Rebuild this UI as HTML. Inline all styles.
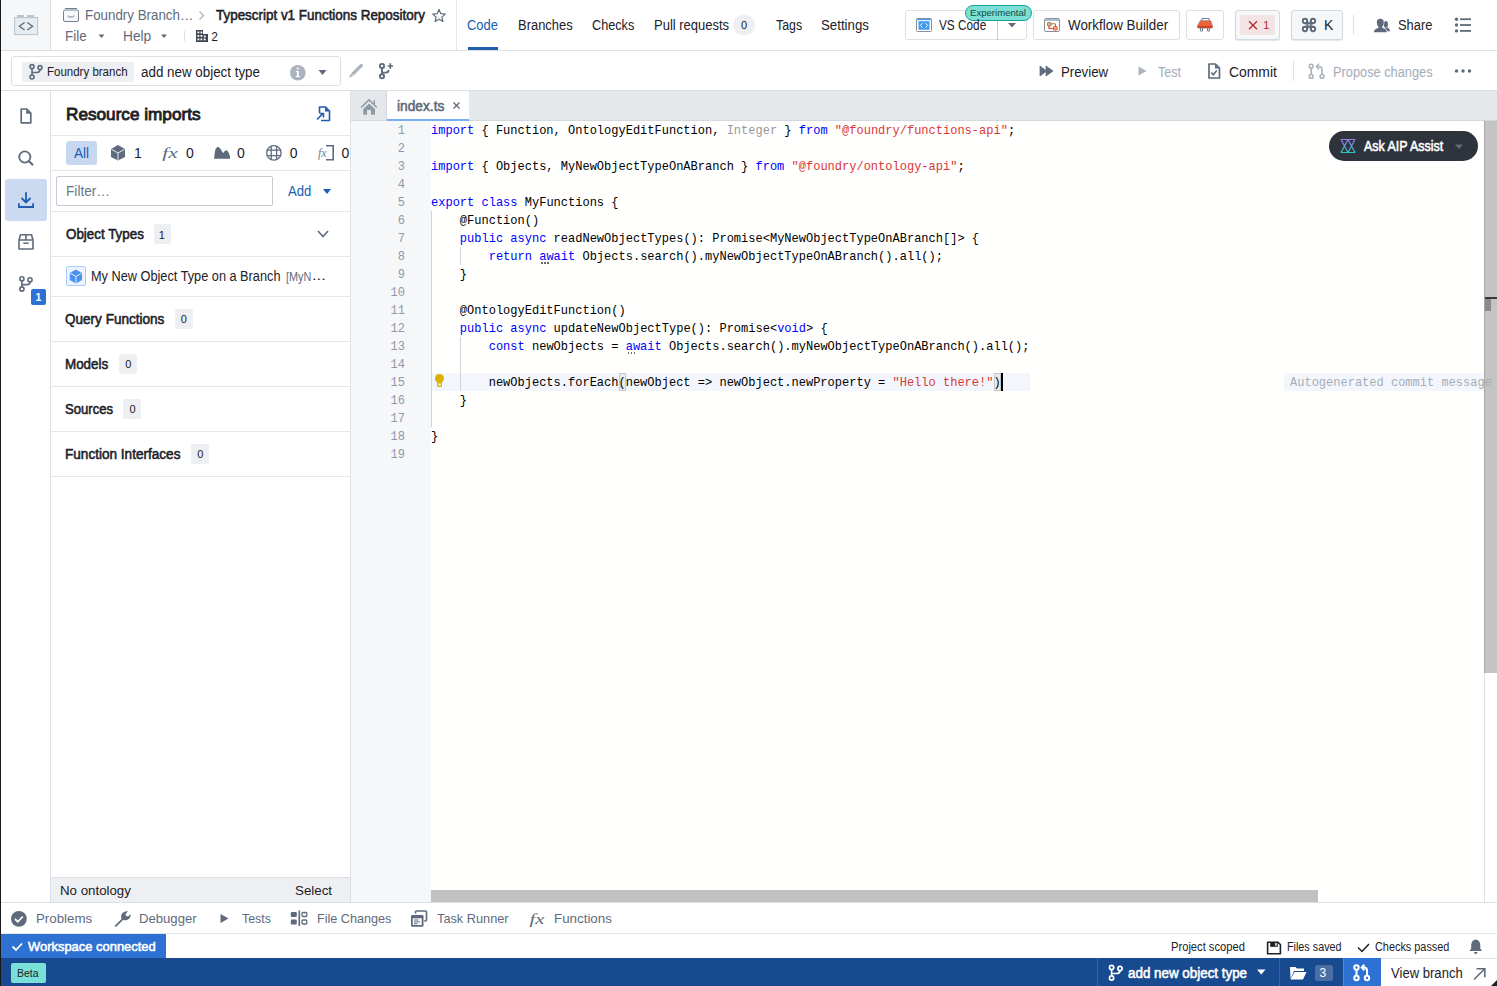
<!DOCTYPE html>
<html><head><meta charset="utf-8">
<style>
*{box-sizing:border-box;margin:0;padding:0}
html,body{width:1497px;height:986px;overflow:hidden;background:#fff}
body{position:relative;font-family:"Liberation Sans",sans-serif;color:#1c2127}
.a{position:absolute}
.t{position:absolute;white-space:pre;line-height:1}
svg{position:absolute;overflow:visible}
</style></head><body>
<!-- left black edge -->
<div class="a" style="left:0;top:0;width:1px;height:934px;background:#111418"></div>
<!-- app icon box -->
<div class="a" style="left:1px;top:0;width:49px;height:50px;background:#f6f7f9"></div>
<div class="a" style="left:50px;top:0;width:1px;height:50px;background:#dce0e5"></div>
<!-- header bottom border -->
<div class="a" style="left:1px;top:50px;width:1496px;height:1px;background:#dce0e5"></div>
<!-- tabs separator -->
<div class="a" style="left:456px;top:0;width:1px;height:50px;background:#e5e8eb"></div>
<!-- row2 bottom border -->
<div class="a" style="left:1px;top:90px;width:1496px;height:1px;background:#dce0e5"></div>

<!-- Code tab underline -->
<div class="a" style="left:468px;top:47px;width:30px;height:3px;background:#215db0"></div>
<!-- pull requests badge -->
<div class="a" style="left:733px;top:15px;width:22px;height:20px;border-radius:10px;background:#edeff2"></div>

<!-- VS Code button -->
<div class="a" style="left:905px;top:10px;width:122px;height:30px;border:1px solid #dce0e5;border-radius:3px;background:#fff"></div>
<div class="a" style="left:997px;top:10px;width:1px;height:30px;background:#c5cbd3"></div>
<div class="a" style="left:965px;top:5px;width:67px;height:16px;border-radius:8px;background:#7cdfd5;border:1px solid #17a395"></div>
<!-- Workflow builder button -->
<div class="a" style="left:1033px;top:10px;width:147px;height:30px;border:1px solid #dce0e5;border-radius:3px;background:#fff"></div>
<!-- plug button -->
<div class="a" style="left:1186px;top:10px;width:38px;height:30px;border:1px solid #dce0e5;border-radius:3px;background:#fff"></div>
<!-- error button -->
<div class="a" style="left:1235px;top:10px;width:45px;height:30px;border:1px solid #d3d8de;border-radius:3px;background:#f6f7f9;box-shadow:0 1px 1px rgba(17,20,24,.1)"></div>
<div class="a" style="left:1240px;top:15px;width:35px;height:20px;border-radius:2px;background:#f2e4e5"></div>
<!-- cmd K button -->
<div class="a" style="left:1291px;top:10px;width:52px;height:30px;border:1px solid #d3d8de;border-radius:3px;background:#f6f7f9;box-shadow:0 1px 1px rgba(17,20,24,.1)"></div>
<div class="a" style="left:1353px;top:15px;width:1px;height:20px;background:#dce0e5"></div>

<!-- branch selector box -->
<div class="a" style="left:11px;top:56px;width:330px;height:30px;border:1px solid #dce0e5;border-radius:3px;background:#fff"></div>
<div class="a" style="left:22px;top:62px;width:112px;height:20px;border-radius:2px;background:#edeff2"></div>
<div class="a" style="left:1293px;top:61px;width:1px;height:20px;background:#dce0e5"></div>

<!-- left rail border -->
<div class="a" style="left:50px;top:91px;width:1px;height:811px;background:#dce0e5"></div>
<div class="a" style="left:5px;top:179px;width:42px;height:42px;border-radius:3px;background:#cbdaf1"></div>
<div class="a" style="left:31px;top:289px;width:15px;height:16px;border-radius:2px;background:#2d72d2"></div>

<!-- panel -->
<div class="a" style="left:350px;top:91px;width:1px;height:811px;background:#dce0e5"></div>
<div class="a" style="left:51px;top:135px;width:299px;height:1px;background:#e5e8eb"></div>
<div class="a" style="left:66px;top:141px;width:31px;height:24px;border-radius:3px;background:#c8d7f0"></div>
<div class="a" style="left:51px;top:170px;width:299px;height:1px;background:#e5e8eb"></div>
<div class="a" style="left:56px;top:176px;width:217px;height:30px;border:1px solid #c5cbd3;border-radius:2px;background:#fff"></div>
<div class="a" style="left:51px;top:211px;width:299px;height:1px;background:#e5e8eb"></div>
<div class="a" style="left:154px;top:224px;width:17px;height:20px;border-radius:2px;background:#edeff2"></div>
<div class="a" style="left:51px;top:256px;width:299px;height:1px;background:#e5e8eb"></div>
<div class="a" style="left:66px;top:266px;width:20px;height:20px;border:1px solid #a9cbff;border-radius:2px;background:#ecf3ff"></div>
<div class="a" style="left:51px;top:296px;width:299px;height:1px;background:#e5e8eb"></div>
<div class="a" style="left:175px;top:309px;width:18px;height:20px;border-radius:2px;background:#edeff2"></div>
<div class="a" style="left:51px;top:341px;width:299px;height:1px;background:#e5e8eb"></div>
<div class="a" style="left:119px;top:354px;width:18px;height:20px;border-radius:2px;background:#edeff2"></div>
<div class="a" style="left:51px;top:386px;width:299px;height:1px;background:#e5e8eb"></div>
<div class="a" style="left:123px;top:399px;width:18px;height:20px;border-radius:2px;background:#edeff2"></div>
<div class="a" style="left:51px;top:431px;width:299px;height:1px;background:#e5e8eb"></div>
<div class="a" style="left:191px;top:444px;width:18px;height:20px;border-radius:2px;background:#edeff2"></div>
<div class="a" style="left:51px;top:476px;width:299px;height:1px;background:#e5e8eb"></div>
<div class="a" style="left:51px;top:877px;width:299px;height:25px;background:#edeff2;border-top:1px solid #dce0e5"></div>

<!-- editor -->
<div class="a" style="left:351px;top:91px;width:1146px;height:30px;background:#e5e8eb"></div>
<div class="a" style="left:386px;top:91px;width:1px;height:29px;background:#d3d8de"></div>
<div class="a" style="left:387px;top:91px;width:82px;height:30px;background:#fff"></div>

<div class="a" style="left:351px;top:120px;width:1146px;height:1px;background:#d3d8de"></div>
<div class="a" style="left:387px;top:119px;width:82px;height:2px;background:#78b0f5"></div>
<div class="a" style="left:351px;top:121px;width:80px;height:781px;background:#f6f7f9"></div>
<div class="a" style="left:431px;top:121px;width:1053px;height:781px;background:#fffffe"></div>
<!-- current line highlight -->
<div class="a" style="left:431px;top:373px;width:599px;height:18px;background:#f3f7fd"></div>
<div class="a" style="left:1284px;top:373px;width:213px;height:18px;background:#f3f7fd"></div>
<!-- indent guides -->
<div class="a" style="left:431px;top:211px;width:1px;height:216px;background:#d3d3d3"></div>
<div class="a" style="left:460px;top:247px;width:1px;height:18px;background:#d3d3d3"></div>
<div class="a" style="left:460px;top:337px;width:1px;height:54px;background:#d3d3d3"></div>
<!-- v scrollbar -->
<div class="a" style="left:1484px;top:121px;width:1px;height:781px;background:#e0e0e0"></div>
<div class="a" style="left:1485px;top:121px;width:12px;height:552px;background:#c4c4c4"></div>
<div class="a" style="left:1484px;top:121px;width:1px;height:552px;background:#a8a8a8"></div>
<div class="a" style="left:1485px;top:297px;width:12px;height:2px;background:#3a3a3a"></div>
<div class="a" style="left:1485px;top:299px;width:6px;height:12px;background:#8a8a8a"></div>
<!-- h scrollbar -->
<div class="a" style="left:431px;top:890px;width:887px;height:12px;background:#c1c1c1"></div>

<div class="t" style="left:351px;top:122px;width:54px;text-align:right;font-family:'Liberation Mono',monospace;font-size:12.03px;line-height:18px;color:#8f99a8">1</div>
<div class="t" style="left:351px;top:140px;width:54px;text-align:right;font-family:'Liberation Mono',monospace;font-size:12.03px;line-height:18px;color:#8f99a8">2</div>
<div class="t" style="left:351px;top:158px;width:54px;text-align:right;font-family:'Liberation Mono',monospace;font-size:12.03px;line-height:18px;color:#8f99a8">3</div>
<div class="t" style="left:351px;top:176px;width:54px;text-align:right;font-family:'Liberation Mono',monospace;font-size:12.03px;line-height:18px;color:#8f99a8">4</div>
<div class="t" style="left:351px;top:194px;width:54px;text-align:right;font-family:'Liberation Mono',monospace;font-size:12.03px;line-height:18px;color:#8f99a8">5</div>
<div class="t" style="left:351px;top:212px;width:54px;text-align:right;font-family:'Liberation Mono',monospace;font-size:12.03px;line-height:18px;color:#8f99a8">6</div>
<div class="t" style="left:351px;top:230px;width:54px;text-align:right;font-family:'Liberation Mono',monospace;font-size:12.03px;line-height:18px;color:#8f99a8">7</div>
<div class="t" style="left:351px;top:248px;width:54px;text-align:right;font-family:'Liberation Mono',monospace;font-size:12.03px;line-height:18px;color:#8f99a8">8</div>
<div class="t" style="left:351px;top:266px;width:54px;text-align:right;font-family:'Liberation Mono',monospace;font-size:12.03px;line-height:18px;color:#8f99a8">9</div>
<div class="t" style="left:351px;top:284px;width:54px;text-align:right;font-family:'Liberation Mono',monospace;font-size:12.03px;line-height:18px;color:#8f99a8">10</div>
<div class="t" style="left:351px;top:302px;width:54px;text-align:right;font-family:'Liberation Mono',monospace;font-size:12.03px;line-height:18px;color:#8f99a8">11</div>
<div class="t" style="left:351px;top:320px;width:54px;text-align:right;font-family:'Liberation Mono',monospace;font-size:12.03px;line-height:18px;color:#8f99a8">12</div>
<div class="t" style="left:351px;top:338px;width:54px;text-align:right;font-family:'Liberation Mono',monospace;font-size:12.03px;line-height:18px;color:#8f99a8">13</div>
<div class="t" style="left:351px;top:356px;width:54px;text-align:right;font-family:'Liberation Mono',monospace;font-size:12.03px;line-height:18px;color:#8f99a8">14</div>
<div class="t" style="left:351px;top:374px;width:54px;text-align:right;font-family:'Liberation Mono',monospace;font-size:12.03px;line-height:18px;color:#8f99a8">15</div>
<div class="t" style="left:351px;top:392px;width:54px;text-align:right;font-family:'Liberation Mono',monospace;font-size:12.03px;line-height:18px;color:#8f99a8">16</div>
<div class="t" style="left:351px;top:410px;width:54px;text-align:right;font-family:'Liberation Mono',monospace;font-size:12.03px;line-height:18px;color:#8f99a8">17</div>
<div class="t" style="left:351px;top:428px;width:54px;text-align:right;font-family:'Liberation Mono',monospace;font-size:12.03px;line-height:18px;color:#8f99a8">18</div>
<div class="t" style="left:351px;top:446px;width:54px;text-align:right;font-family:'Liberation Mono',monospace;font-size:12.03px;line-height:18px;color:#8f99a8">19</div>
<div class="t" style="left:431px;top:122px;font-family:'Liberation Mono',monospace;font-size:12.03px;line-height:18px;color:#000"><span style="color:#0000ff">import</span> { Function, OntologyEditFunction, <span style="color:#9a9a9a">Integer</span> } <span style="color:#0000ff">from</span> <span style="color:#d93737">&quot;@foundry/functions-api&quot;</span>;</div>
<div class="t" style="left:431px;top:158px;font-family:'Liberation Mono',monospace;font-size:12.03px;line-height:18px;color:#000"><span style="color:#0000ff">import</span> { Objects, MyNewObjectTypeOnABranch } <span style="color:#0000ff">from</span> <span style="color:#d93737">&quot;@foundry/ontology-api&quot;</span>;</div>
<div class="t" style="left:431px;top:194px;font-family:'Liberation Mono',monospace;font-size:12.03px;line-height:18px;color:#000"><span style="color:#0000ff">export</span> <span style="color:#0000ff">class</span> MyFunctions {</div>
<div class="t" style="left:431px;top:212px;font-family:'Liberation Mono',monospace;font-size:12.03px;line-height:18px;color:#000">    @Function()</div>
<div class="t" style="left:431px;top:230px;font-family:'Liberation Mono',monospace;font-size:12.03px;line-height:18px;color:#000">    <span style="color:#0000ff">public</span> <span style="color:#0000ff">async</span> readNewObjectTypes(): Promise&lt;MyNewObjectTypeOnABranch[]&gt; {</div>
<div class="t" style="left:431px;top:248px;font-family:'Liberation Mono',monospace;font-size:12.03px;line-height:18px;color:#000">        <span style="color:#0000ff">return</span> <span style="color:#0000ff">await</span> Objects.search().myNewObjectTypeOnABranch().all();</div>
<div class="t" style="left:431px;top:266px;font-family:'Liberation Mono',monospace;font-size:12.03px;line-height:18px;color:#000">    }</div>
<div class="t" style="left:431px;top:302px;font-family:'Liberation Mono',monospace;font-size:12.03px;line-height:18px;color:#000">    @OntologyEditFunction()</div>
<div class="t" style="left:431px;top:320px;font-family:'Liberation Mono',monospace;font-size:12.03px;line-height:18px;color:#000">    <span style="color:#0000ff">public</span> <span style="color:#0000ff">async</span> updateNewObjectType(): Promise&lt;<span style="color:#0000ff">void</span>&gt; {</div>
<div class="t" style="left:431px;top:338px;font-family:'Liberation Mono',monospace;font-size:12.03px;line-height:18px;color:#000">        <span style="color:#0000ff">const</span> newObjects = <span style="color:#0000ff">await</span> Objects.search().myNewObjectTypeOnABranch().all();</div>
<div class="t" style="left:431px;top:374px;font-family:'Liberation Mono',monospace;font-size:12.03px;line-height:18px;color:#000">        newObjects.forEach(newObject =&gt; newObject.newProperty = <span style="color:#d93737">&quot;Hello there!&quot;</span>)</div>
<div class="t" style="left:431px;top:392px;font-family:'Liberation Mono',monospace;font-size:12.03px;line-height:18px;color:#000">    }</div>
<div class="t" style="left:431px;top:428px;font-family:'Liberation Mono',monospace;font-size:12.03px;line-height:18px;color:#000">}</div>
<div class="t" style="left:1290px;top:374px;font-family:'Liberation Mono',monospace;font-size:12.03px;line-height:18px;color:#a7adb6">Autogenerated commit message</div>
<div class="a" style="left:618.7px;top:373px;width:7px;height:18px;border:1px solid #c8c8c8;background:rgba(0,100,0,.06)"></div>
<div class="a" style="left:994.0px;top:373px;width:7px;height:18px;border:1px solid #c8c8c8;background:rgba(0,100,0,.06)"></div>
<div class="a" style="left:1001px;top:373px;width:2px;height:18px;background:#000"></div>
<div class="a" style="left:541.3px;top:262px;width:1.5px;height:1.5px;background:#6b6b6b"></div>
<div class="a" style="left:544.3px;top:262px;width:1.5px;height:1.5px;background:#6b6b6b"></div>
<div class="a" style="left:547.3px;top:262px;width:1.5px;height:1.5px;background:#6b6b6b"></div>
<div class="a" style="left:627.9px;top:352px;width:1.5px;height:1.5px;background:#6b6b6b"></div>
<div class="a" style="left:630.9px;top:352px;width:1.5px;height:1.5px;background:#6b6b6b"></div>
<div class="a" style="left:633.9px;top:352px;width:1.5px;height:1.5px;background:#6b6b6b"></div>
<svg style="left:434px;top:373px" width="12" height="16" viewBox="0 0 12 16"><circle cx="5.5" cy="5.5" r="4.5" fill="#ddb100"/><rect x="3" y="8" width="5" height="6" rx="1" fill="#ddb100"/><rect x="4.3" y="10.5" width="2.4" height="2" fill="#fff"/></svg>

<!-- AIP assist -->
<div class="a" style="left:1329px;top:131px;width:149px;height:30px;border-radius:15px;background:#2f343c"></div>

<!-- bottom toolbar -->
<div class="a" style="left:1px;top:902px;width:1496px;height:1px;background:#dce0e5"></div>
<div class="a" style="left:1px;top:933px;width:1496px;height:1px;background:#e5e8eb"></div>
<div class="a" style="left:1px;top:934px;width:165px;height:24px;background:#2d72d2"></div>
<!-- status bar -->
<div class="a" style="left:0;top:958px;width:1497px;height:28px;background:#184a90"></div>
<div class="a" style="left:11px;top:963px;width:35px;height:20px;border-radius:2px;background:#7ae1d8"></div>
<div class="a" style="left:1097px;top:958px;width:1px;height:28px;background:#3463a3"></div>
<div class="a" style="left:1279px;top:958px;width:1px;height:28px;background:#3463a3"></div>
<div class="a" style="left:1315px;top:965px;width:18px;height:16px;border-radius:2px;background:#4b6fa5"></div>
<div class="a" style="left:1343px;top:958px;width:38px;height:28px;background:#2d72d2"></div>
<div class="a" style="left:1381px;top:958px;width:116px;height:28px;background:#fff;border-top:1px solid #dce0e5"></div>
<div class="a" style="left:1343px;top:958px;width:1px;height:28px;background:#4f8ae0"></div>

<svg style="left:0;top:0;pointer-events:none" width="1497" height="986" viewBox="0 0 1497 986">
<!-- app icon -->
<g>
 <rect x="17" y="15" width="7" height="2.5" fill="#b9c6d2"/>
 <rect x="27" y="15" width="7" height="2.5" fill="#b9c6d2"/>
 <rect x="14.6" y="17.6" width="23" height="17" fill="#e8edf1" stroke="#b9c6d2" stroke-width="1.1"/>
 <path d="M24.6 22.5 L19.3 26.2 L24.6 30 M27.3 22.5 L32.6 26.2 L27.3 30" fill="none" stroke="#5f6b7c" stroke-width="1.3"/>
</g>
<!-- breadcrumb folder icon -->
<g fill="none" stroke="#738091" stroke-width="1">
 <rect x="63.5" y="10" width="15" height="11.5" rx="1.5" fill="#f6f7f9"/>
 <path d="M65 8.5 H77"/>
 <path d="M68 15.5 Q68 17 69.5 17 H72.5 Q74 17 74 15.5" />
</g>
<!-- chevron right -->
<path d="M199.5 11.5 L203.5 15.5 L199.5 19.5" fill="none" stroke="#abb3bf" stroke-width="1.3"/>
<!-- star -->
<path d="M439 9.5 L440.8 13.7 L445.3 14.1 L441.9 17.1 L442.9 21.5 L439 19.2 L435.1 21.5 L436.1 17.1 L432.7 14.1 L437.2 13.7 Z" fill="none" stroke="#5f6b7c" stroke-width="1.2" stroke-linejoin="round"/>
<!-- File/Help carets -->
<path d="M98.5 34.5 H104.5 L101.5 38 Z" fill="#5f6b7c"/>
<path d="M161 34.5 H167 L164 38 Z" fill="#5f6b7c"/>
<rect x="184" y="31" width="1" height="10" fill="#dce0e5"/>
<!-- building icon -->
<g fill="#404854">
 <path d="M196 30 H203 V34 H208 V42 H196 Z"/>
 <rect x="197.5" y="31.5" width="1.8" height="1.8" fill="#fff"/><rect x="200.5" y="31.5" width="1.8" height="1.8" fill="#fff"/>
 <rect x="197.5" y="35" width="1.8" height="1.8" fill="#fff"/><rect x="200.5" y="35" width="1.8" height="1.8" fill="#fff"/>
 <rect x="203.8" y="35.5" width="1.8" height="1.8" fill="#fff"/>
 <rect x="197.5" y="38.5" width="1.8" height="1.8" fill="#fff"/><rect x="200.5" y="38.5" width="1.8" height="1.8" fill="#fff"/><rect x="203.8" y="38.5" width="1.8" height="1.8" fill="#fff"/>
</g>
<!-- VS code icon -->
<g>
 <rect x="916.5" y="18.5" width="15" height="13" rx="1" fill="#fff" stroke="#8a9099" stroke-width="1"/>
 <rect x="917" y="19" width="14" height="1.2" fill="#4299f0"/>
 <rect x="918.5" y="21.2" width="11" height="8.5" fill="#4299f0"/>
 <path d="M922.5 23.2 L920.3 25.4 L922.5 27.6 M925.5 23.2 L927.7 25.4 L925.5 27.6" fill="none" stroke="#fff" stroke-width="1"/>
</g>
<path d="M1008 23 H1016 L1012 27.5 Z" fill="#5f6b7c"/>
<!-- workflow builder icon -->
<g>
 <rect x="1044.5" y="18.5" width="15" height="13" rx="1.5" fill="#fff" stroke="#8a9099" stroke-width="1"/>
 <rect x="1045" y="19.2" width="14" height="1.6" fill="#9db0c2"/>
 <rect x="1047.5" y="22.5" width="3.5" height="3.5" rx=".6" fill="#d8b690" stroke="#a87740" stroke-width=".9"/>
 <path d="M1051 23.8 H1055.5 V27" fill="none" stroke="#a87740" stroke-width="1"/>
 <path d="M1049 26 V28.5 H1053.5" fill="none" stroke="#e24a22" stroke-width="1.2"/>
 <rect x="1053.5" y="26.5" width="3.6" height="3.6" rx=".6" fill="#f5a28a" stroke="#e55a33" stroke-width="1"/>
</g>
<!-- plug icon -->
<g>
 <path d="M1201.5 20.5 L1202.3 18.5 H1208.7 L1209.5 20.5" fill="none" stroke="#738091" stroke-width="1.1"/>
 <path d="M1200.2 20.5 H1210.8 L1212.6 25.8 Q1213.2 28.2 1210.8 28.2 H1199.2 Q1196.8 28.2 1197.4 25.8 Z" fill="#e8643c" stroke="#8a949e" stroke-width=".5"/>
 <path d="M1197.6 25.9 H1212.4 Q1213 28.1 1210.8 28.1 H1199.2 Q1197 28.1 1197.6 25.9 Z" fill="#d9431a"/>
 <path d="M1200.5 27.5 V30.5 Q1201.5 32 1202.5 30.5 V27.5 M1207.5 27.5 V30.5 Q1208.5 32 1209.5 30.5 V27.5" fill="none" stroke="#738091" stroke-width="1.1"/>
</g>
<!-- error x -->
<path d="M1249 21.2 L1257 29.2 M1257 21.2 L1249 29.2" stroke="#b8262d" stroke-width="1.3"/>
<!-- cmd icon -->
<g fill="none" stroke="#5f6b7c" stroke-width="1.9">
 <path d="M1307.3 21 V29 M1310.7 21 V29 M1305 23.3 H1313 M1305 26.7 H1313"/>
 <circle cx="1305" cy="21" r="2.2"/><circle cx="1313" cy="21" r="2.2"/>
 <circle cx="1305" cy="29" r="2.2"/><circle cx="1313" cy="29" r="2.2"/>
</g>
<!-- share icon -->
<g fill="#5f6b7c">
 <ellipse cx="1385.9" cy="24.3" rx="2.1" ry="3.3"/>
 <path d="M1384.5 27.5 L1387.5 27.5 Q1389.8 28.8 1390.2 31 L1388 31.4 Z"/>
</g>
<g fill="#5f6b7c" stroke="#fff" stroke-width="0.9" paint-order="stroke">
 <path d="M1380.3 18.8 Q1383.9 18.8 1383.8 23 Q1383.7 25.6 1382.2 27 L1382.3 27.9 Q1386.6 28.8 1387 32.2 H1373.7 Q1374.2 28.8 1378.4 27.9 L1378.5 27 Q1376.9 25.6 1376.8 23 Q1376.7 18.8 1380.3 18.8 Z"/>
</g>
<!-- list icon -->
<g fill="#5f6b7c">
 <circle cx="1456.5" cy="19.2" r="1.7"/><circle cx="1456.5" cy="25" r="1.7"/><circle cx="1456.5" cy="30.9" r="1.7"/>
 <rect x="1460" y="18.3" width="11" height="1.8"/><rect x="1460" y="24.1" width="11" height="1.8"/><rect x="1460" y="30" width="11" height="1.8"/>
</g>

<!-- row2: branch icon in tag -->
<g fill="none" stroke="#5f6b7c" stroke-width="1.6">
 <circle cx="32" cy="66.6" r="2"/><circle cx="40" cy="67.6" r="2"/><circle cx="32" cy="77" r="2"/>
 <path d="M32 68.6 V75 M40 69.6 Q40 72.5 37 72.5 H32"/>
</g>
<!-- info -->
<circle cx="297.8" cy="72.8" r="7.8" fill="#abb3bf"/>
<rect x="296.9" y="71" width="1.9" height="5.8" fill="#fff"/><rect x="295.8" y="76" width="4.1" height="1.2" fill="#fff"/><rect x="295.8" y="71" width="2" height="1" fill="#fff"/>
<circle cx="297.8" cy="68.6" r="1.1" fill="#fff"/>
<path d="M318.5 70 H326.5 L322.5 75 Z" fill="#5f6b7c"/>
<!-- pencil -->
<path d="M352.6 74.2 L361.4 65.4" stroke="#abb3bf" stroke-width="3.3" stroke-linecap="round"/>
<path d="M349.2 77.6 L350.3 73.9 L352.9 76.5 Z" fill="#abb3bf"/>
<path d="M351 73.6 L353.3 75.9" stroke="#fff" stroke-width=".8"/>
<!-- branch plus -->
<g fill="none" stroke="#5f6b7c" stroke-width="1.9">
 <circle cx="382" cy="66" r="2.1"/><circle cx="382" cy="76.3" r="2.1"/>
 <path d="M382 68.1 V74.2 M388.6 70 Q388.6 72.6 385.6 72.6 H382"/>
 <path d="M390.3 63.3 V68.7 M387.6 66 H393" stroke-width="1.7"/>
</g>
<!-- preview -->
<path d="M1040 66 L1046.5 71 L1040 76 Z M1046 66 L1053 71 L1046 76 Z" fill="#5f6b7c" stroke="#5f6b7c" stroke-width=".8" stroke-linejoin="round"/>
<!-- test play -->
<path d="M1138.5 66.5 L1146.5 71 L1138.5 75.5 Z" fill="#abb3bf"/>
<!-- commit doc -->
<path d="M1209 64 H1215.5 L1219.5 68 V78 H1209 Z" fill="none" stroke="#5f6b7c" stroke-width="1.7" stroke-linejoin="round"/>
<path d="M1215 64 V68.5 H1219.5 Z" fill="#5f6b7c"/>
<path d="M1211.3 72.5 L1213.3 74.8 L1216.8 70.5" fill="none" stroke="#5f6b7c" stroke-width="1.6"/>
<!-- propose changes -->
<g fill="none" stroke="#abb3bf" stroke-width="1.6">
 <circle cx="1311.2" cy="66.2" r="1.9"/><circle cx="1311.2" cy="76.4" r="1.9"/><circle cx="1322" cy="76.4" r="1.9"/>
 <path d="M1311.2 68 V74.5 M1322 74.5 V69.5 Q1322 66.5 1319 66.5 H1317"/>
 <path d="M1319 63.8 L1316.5 66.5 L1319 69.2"/>
</g>
<!-- more -->
<g fill="#5f6b7c"><circle cx="1456.5" cy="71" r="1.7"/><circle cx="1463" cy="71" r="1.7"/><circle cx="1469.5" cy="71" r="1.7"/></g>

<!-- left rail -->
<g fill="none" stroke="#5f6b7c" stroke-width="1.7" stroke-linejoin="round">
 <path d="M21.2 109 H26.8 L30.8 113 V122.8 H21.2 Z"/>
</g>
<path d="M26.2 109 V113.8 H31 Z" fill="#5f6b7c"/>
<g fill="none" stroke="#5f6b7c" stroke-width="1.8">
 <circle cx="24.8" cy="157" r="5.6"/>
 <path d="M28.8 161 L33 165.2" stroke-width="2.2"/>
</g>
<g fill="none" stroke="#215db0" stroke-width="1.8" stroke-linecap="round">
 <path d="M26 192.8 V202.5 M22 198.5 L26 202.5 L30 198.5"/>
 <path d="M18.9 204 V207 H33.1 V204"/>
</g>
<g fill="none" stroke="#5f6b7c" stroke-width="1.6" stroke-linejoin="round">
 <path d="M19 240 L20.5 234.8 H31.5 L33 240 V249 H19 Z M19 240 H33 M26 234.8 V240"/>
 <path d="M23.3 243.2 H28.7" stroke-width="1.5"/>
</g>
<g fill="none" stroke="#5f6b7c" stroke-width="1.6">
 <circle cx="21.9" cy="278.8" r="2.1"/><circle cx="30" cy="279.8" r="2.1"/><circle cx="21.9" cy="289" r="2.1"/>
 <path d="M21.9 280.9 V286.9 M30 281.9 Q30 284.6 27 284.6 H21.9"/>
</g>
<text x="38.5" y="301" font-family="Liberation Sans" font-size="10.5" font-weight="700" fill="#fff" text-anchor="middle">1</text>

<!-- panel header import icon -->
<g fill="none" stroke="#215db0" stroke-width="1.6" stroke-linejoin="round">
 <path d="M319.5 113 V107 H325.5 L329.5 111 V120.5 H321"/>
 <path d="M317 119.5 L323 113.5 M319.5 113.5 H323.5 V117.5"/>
</g>
<path d="M325 107 V111.5 H329.5 Z" fill="#215db0"/>
<!-- cube -->
<path d="M118 145 L125 149 V157 L118 160.5 L111 157 V149 Z" fill="#5f6b7c"/>
<path d="M111.5 149.3 L118 153 L124.5 149.3 M118 153 V160" fill="none" stroke="#fff" stroke-width="1" opacity=".85"/>
<!-- fx -->
<text x="162.3" y="157.5" font-family="Liberation Serif" font-style="italic" font-size="15.5" textLength="15.5" lengthAdjust="spacingAndGlyphs" fill="#5f6b7c">fx</text>
<!-- mountain -->
<path d="M214 158.8 L215 151 Q216 147 218 147 Q220 147 222 151.5 L223.5 153 Q225 149.5 227 150.5 Q229 152 230 157 L230 158.8 Z" fill="#5f6b7c"/>
<!-- globe -->
<g fill="none" stroke="#5f6b7c" stroke-width="1.3">
 <circle cx="273.9" cy="152.9" r="7.2"/>
 <path d="M266.7 150.2 H281.1 M266.7 155.6 H281.1 M271.2 146 V159.8 M276.6 146 V159.8"/>
</g>
<!-- fx doc -->
<path d="M326 145.8 H333.2 V159.8 H326" fill="none" stroke="#5f6b7c" stroke-width="1.6"/>
<text x="318" y="157" font-family="Liberation Serif" font-style="italic" font-size="12" fill="#738091">fx</text>
<!-- Add caret -->
<path d="M323 189 H331 L327 194 Z" fill="#215db0"/>
<!-- chevron down -->
<path d="M318 231 L323 236.5 L328 231" fill="none" stroke="#5f6b7c" stroke-width="1.6"/>
<!-- blue cube -->
<path d="M75.9 269.5 L82 273 V280 L75.9 283.5 L69.8 280 V273 Z" fill="#4c90f0"/>
<path d="M70.3 273.3 L75.9 276.5 L81.5 273.3 M75.9 276.5 V283" fill="none" stroke="#e8f1ff" stroke-width="1"/>

<!-- editor home -->
<path d="M361.6 107 L369 99.9 L376.4 107" fill="none" stroke="#8f99a8" stroke-width="1.5" stroke-linecap="round" stroke-linejoin="round"/>
<path d="M374.3 100.6 V103.8" fill="none" stroke="#8f99a8" stroke-width="1.4" stroke-linecap="round"/>
<path d="M369 103.4 L375 109 V114 Q375 114.8 374.2 114.8 H371 V110 H367 V114.8 H364 Q363.2 114.8 363.2 114 V109 Z" fill="#8f99a8"/>
<!-- tab close -->
<path d="M453.5 102.5 L459.5 108.5 M459.5 102.5 L453.5 108.5" stroke="#5f6b7c" stroke-width="1.3"/>
<!-- AIP icon -->
<defs><linearGradient id="aipg" x1="0" y1="0" x2="0" y2="1"><stop offset="0" stop-color="#9b7cf0"/><stop offset="1" stop-color="#2ec4c4"/></linearGradient></defs>
<g fill="none" stroke="url(#aipg)" stroke-width="1.2">
 <path d="M1340.8 139.5 H1355.2 M1340.8 152.5 H1355.2 M1341 139.5 L1348 152.5 M1348 139.5 L1341 152.5 M1348 139.5 L1355 152.5 M1355 139.5 L1348 152.5"/>
</g>
<path d="M1455 144.5 H1463 L1459 149 Z" fill="#5f6b7c"/>

<!-- bottom toolbar -->
<circle cx="18.9" cy="918.8" r="7.9" fill="#5f6b7c"/>
<path d="M15 919 L17.8 921.8 L22.8 916.5" fill="none" stroke="#fff" stroke-width="1.8"/>
<path d="M114.5 926 L121.5 919 Q120 914 124 912 Q126 911 128 911.5 L125.5 914 L126 916 L128 916.5 L130.5 914 Q131 916.5 129.5 918.5 Q127 921 123 920 L116 927 Z" fill="#5f6b7c"/>
<path d="M220.5 914 L228.5 918.5 L220.5 923 Z" fill="#5f6b7c"/>
<g fill="#5f6b7c">
 <rect x="290.8" y="912" width="6" height="5" rx="1.2"/><rect x="290.8" y="919.5" width="6" height="5" rx="1.2"/>
 <rect x="298.5" y="910.5" width="1.6" height="15.5"/>
</g>
<g fill="none" stroke="#5f6b7c" stroke-width="1.3"><rect x="302" y="912.5" width="4.8" height="4" rx="1"/><rect x="302" y="920" width="4.8" height="4" rx="1"/></g>
<path d="M415.5 913.6 V912 Q415.5 911 416.5 911 H425.5 Q426.5 911 426.5 912 V920 Q426.5 921 425.5 921 H424.2" fill="none" stroke="#5f6b7c" stroke-width="1.6"/>
<rect x="411" y="915" width="12.5" height="11.8" rx="1.2" fill="#5f6b7c"/>
<rect x="412.8" y="918.3" width="8.9" height="6.7" fill="#fff"/>
<path d="M414 920 H418.5 M414 921.9 H420 M414 923.8 H417.5" stroke="#5f6b7c" stroke-width="1"/>
<text x="529.5" y="924" font-family="Liberation Serif" font-style="italic" font-size="15.5" textLength="15" lengthAdjust="spacingAndGlyphs" fill="#5f6b7c">fx</text>
<!-- workspace check -->
<path d="M12.5 946.5 L16 950 L22 943.5" fill="none" stroke="#fff" stroke-width="1.8"/>

<!-- status right -->
<path d="M1267.6 942.2 H1278 L1280.4 944.6 V953.8 H1267.6 Z" fill="none" stroke="#1c2127" stroke-width="1.6" stroke-linejoin="round"/>
<rect x="1270.2" y="942" width="7.6" height="4.8" fill="#1c2127"/>
<rect x="1275.2" y="943" width="1.5" height="2.8" fill="#fff"/>
<path d="M1358 947.5 L1362 951.5 L1369 944" fill="none" stroke="#1c2127" stroke-width="1.5"/>
<path d="M1475.7 939.5 Q1480 940 1480.3 945 V948.5 L1482 951 H1469.5 L1471.2 948.5 V945 Q1471.5 940 1475.7 939.5 Z M1474 952 H1477.5 Q1477.5 954 1475.7 954 Q1474 954 1474 952 Z" fill="#5f6b7c"/>
<path d="M1497 980 L1497 986 L1491 986 Z" fill="#1c2127"/>
<rect x="0" y="0" width="1" height="986" fill="#17191c"/>
<g fill="none" stroke="#fff" stroke-width="1.7">
 <circle cx="1111.6" cy="967.5" r="2.1"/><circle cx="1120" cy="968.5" r="2.1"/><circle cx="1111.6" cy="978" r="2.1"/>
 <path d="M1111.6 969.6 V975.9 M1120 970.6 Q1120 973.5 1117 973.5 H1111.6"/>
</g>
<path d="M1257 969.5 H1265.5 L1261.2 974.5 Z" fill="#fff"/>
<path d="M1290 967 H1295.5 L1297 968.5 H1304 V971 H1294 L1290.5 979 Z M1294.5 972 H1306.5 L1303 979.5 H1290.5 Z" fill="#fff"/>
<g fill="none" stroke="#fff" stroke-width="2">
 <circle cx="1356.5" cy="967.5" r="2.2"/><circle cx="1356.5" cy="978" r="2.2"/><circle cx="1367" cy="978" r="2.2"/>
 <path d="M1356.5 969.7 V975.8 M1367 975.8 V970.5 Q1367 967.5 1364 967.5 H1362"/>
 <path d="M1364.3 964.8 L1361.8 967.5 L1364.3 970.2"/>
</g>
<path d="M1474 979.5 L1484.5 969 M1476.5 968.8 H1484.8 V977.2" fill="none" stroke="#5f6b7c" stroke-width="1.6"/>
</svg>


<div class="t" style="left:84.75px;top:8.0px;font-size:14px;font-weight:400;color:#5f6b7c;font-family:'Liberation Sans',sans-serif;transform:scaleX(0.9532);transform-origin:0 0;">Foundry Branch…</div>
<div class="t" style="left:216.00px;top:8.0px;font-size:14px;font-weight:400;color:#1c2127;font-family:'Liberation Sans',sans-serif;transform:scaleX(0.9587);transform-origin:0 0;-webkit-text-stroke:0.55px #1c2127;">Typescript v1 Functions Repository</div>
<div class="t" style="left:65.44px;top:29.0px;font-size:14px;font-weight:400;color:#5f6b7c;font-family:'Liberation Sans',sans-serif;transform:scaleX(0.9571);transform-origin:0 0;">File</div>
<div class="t" style="left:122.52px;top:29.0px;font-size:14px;font-weight:400;color:#5f6b7c;font-family:'Liberation Sans',sans-serif;transform:scaleX(0.9815);transform-origin:0 0;">Help</div>
<div class="t" style="left:211.30px;top:31.0px;font-size:12px;font-weight:400;color:#1c2127;font-family:'Liberation Sans',sans-serif;">2</div>
<div class="t" style="left:467.47px;top:18.0px;font-size:14px;font-weight:400;color:#215db0;font-family:'Liberation Sans',sans-serif;transform:scaleX(0.9250);transform-origin:0 0;">Code</div>
<div class="t" style="left:518.08px;top:18.0px;font-size:14px;font-weight:400;color:#1c2127;font-family:'Liberation Sans',sans-serif;transform:scaleX(0.9241);transform-origin:0 0;">Branches</div>
<div class="t" style="left:592.40px;top:18.0px;font-size:14px;font-weight:400;color:#1c2127;font-family:'Liberation Sans',sans-serif;transform:scaleX(0.9044);transform-origin:0 0;">Checks</div>
<div class="t" style="left:654.47px;top:18.0px;font-size:14px;font-weight:400;color:#1c2127;font-family:'Liberation Sans',sans-serif;transform:scaleX(0.9275);transform-origin:0 0;">Pull requests</div>
<div class="t" style="left:741.00px;top:20.0px;font-size:11px;font-weight:400;color:#1c2127;font-family:'Liberation Sans',sans-serif;">0</div>
<div class="t" style="left:775.70px;top:18.0px;font-size:14px;font-weight:400;color:#1c2127;font-family:'Liberation Sans',sans-serif;transform:scaleX(0.8828);transform-origin:0 0;">Tags</div>
<div class="t" style="left:820.85px;top:18.0px;font-size:14px;font-weight:400;color:#1c2127;font-family:'Liberation Sans',sans-serif;transform:scaleX(0.9469);transform-origin:0 0;">Settings</div>
<div class="t" style="left:939.40px;top:18.0px;font-size:14px;font-weight:400;color:#1c2127;font-family:'Liberation Sans',sans-serif;transform:scaleX(0.8429);transform-origin:0 0;">VS Code</div>
<div class="t" style="left:970.49px;top:8.0px;font-size:9.5px;font-weight:400;color:#0f4a44;font-family:'Liberation Sans',sans-serif;transform:scaleX(1.0093);transform-origin:0 0;">Experimental</div>
<div class="t" style="left:1068.00px;top:18.0px;font-size:14px;font-weight:400;color:#1c2127;font-family:'Liberation Sans',sans-serif;transform:scaleX(0.9562);transform-origin:0 0;">Workflow Builder</div>
<div class="t" style="left:1263.30px;top:20.0px;font-size:11px;font-weight:400;color:#b42328;font-family:'Liberation Sans',sans-serif;">1</div>
<div class="t" style="left:1324.00px;top:18.0px;font-size:14px;font-weight:400;color:#1c2127;font-family:'Liberation Sans',sans-serif;">K</div>
<div class="t" style="left:1397.68px;top:18.0px;font-size:14px;font-weight:400;color:#1c2127;font-family:'Liberation Sans',sans-serif;transform:scaleX(0.9194);transform-origin:0 0;">Share</div>
<div class="t" style="left:47.44px;top:66.0px;font-size:12px;font-weight:400;color:#1c2127;font-family:'Liberation Sans',sans-serif;transform:scaleX(0.9585);transform-origin:0 0;">Foundry branch</div>
<div class="t" style="left:141.04px;top:65.0px;font-size:14px;font-weight:400;color:#1c2127;font-family:'Liberation Sans',sans-serif;transform:scaleX(0.9553);transform-origin:0 0;">add new object type</div>
<div class="t" style="left:1061.06px;top:64.5px;font-size:14px;font-weight:400;color:#1c2127;font-family:'Liberation Sans',sans-serif;transform:scaleX(0.9449);transform-origin:0 0;">Preview</div>
<div class="t" style="left:1157.70px;top:64.5px;font-size:14px;font-weight:400;color:#a3acb9;font-family:'Liberation Sans',sans-serif;transform:scaleX(0.8962);transform-origin:0 0;">Test</div>
<div class="t" style="left:1229.31px;top:64.5px;font-size:14px;font-weight:400;color:#1c2127;font-family:'Liberation Sans',sans-serif;transform:scaleX(0.9936);transform-origin:0 0;">Commit</div>
<div class="t" style="left:1333.09px;top:64.5px;font-size:14px;font-weight:400;color:#a3acb9;font-family:'Liberation Sans',sans-serif;transform:scaleX(0.9139);transform-origin:0 0;">Propose changes</div>
<div class="t" style="left:66.06px;top:106.0px;font-size:16.5px;font-weight:400;color:#1c2127;font-family:'Liberation Sans',sans-serif;transform:scaleX(1.0406);transform-origin:0 0;-webkit-text-stroke:0.85px #1c2127;">Resource imports</div>
<div class="t" style="left:73.80px;top:146.0px;font-size:14px;font-weight:400;color:#215db0;font-family:'Liberation Sans',sans-serif;transform:scaleX(0.9733);transform-origin:0 0;">All</div>
<div class="t" style="left:133.90px;top:146.0px;font-size:14px;font-weight:400;color:#1c2127;font-family:'Liberation Sans',sans-serif;">1</div>
<div class="t" style="left:186.00px;top:146.0px;font-size:14px;font-weight:400;color:#1c2127;font-family:'Liberation Sans',sans-serif;">0</div>
<div class="t" style="left:237.00px;top:146.0px;font-size:14px;font-weight:400;color:#1c2127;font-family:'Liberation Sans',sans-serif;">0</div>
<div class="t" style="left:289.70px;top:146.0px;font-size:14px;font-weight:400;color:#1c2127;font-family:'Liberation Sans',sans-serif;">0</div>
<div class="t" style="left:341.40px;top:146.0px;font-size:14px;font-weight:400;color:#1c2127;font-family:'Liberation Sans',sans-serif;">0</div>
<div class="t" style="left:65.72px;top:184.0px;font-size:14px;font-weight:400;color:#6b7685;font-family:'Liberation Sans',sans-serif;transform:scaleX(0.9762);transform-origin:0 0;">Filter…</div>
<div class="t" style="left:288.00px;top:184.0px;font-size:14px;font-weight:400;color:#215db0;font-family:'Liberation Sans',sans-serif;transform:scaleX(0.9333);transform-origin:0 0;">Add</div>
<div class="t" style="left:65.54px;top:227.0px;font-size:14px;font-weight:400;color:#1c2127;font-family:'Liberation Sans',sans-serif;transform:scaleX(0.9563);transform-origin:0 0;-webkit-text-stroke:0.55px #1c2127;">Object Types</div>
<div class="t" style="left:158.70px;top:229.6px;font-size:11px;font-weight:400;color:#1c2127;font-family:'Liberation Sans',sans-serif;">1</div>
<div class="t" style="left:91.29px;top:269.0px;font-size:14px;font-weight:400;color:#1c2127;font-family:'Liberation Sans',sans-serif;transform:scaleX(0.9097);transform-origin:0 0;">My New Object Type on a Branch</div>
<div class="t" style="left:285.97px;top:270.0px;font-size:13px;font-weight:400;color:#5f6b7c;font-family:'Liberation Sans',sans-serif;transform:scaleX(0.8345);transform-origin:0 0;">[MyN</div>
<div class="t" style="left:311.52px;top:268.5px;font-size:13px;font-weight:400;color:#1c2127;font-family:'Liberation Sans',sans-serif;transform:scaleX(1.2778);transform-origin:0 0;">...</div>
<div class="t" style="left:65.43px;top:312.0px;font-size:14px;font-weight:400;color:#1c2127;font-family:'Liberation Sans',sans-serif;transform:scaleX(0.9673);transform-origin:0 0;-webkit-text-stroke:0.55px #1c2127;">Query Functions</div>
<div class="t" style="left:180.80px;top:314.0px;font-size:11px;font-weight:400;color:#1c2127;font-family:'Liberation Sans',sans-serif;">0</div>
<div class="t" style="left:65.44px;top:357.0px;font-size:14px;font-weight:400;color:#1c2127;font-family:'Liberation Sans',sans-serif;transform:scaleX(0.9568);transform-origin:0 0;-webkit-text-stroke:0.55px #1c2127;">Models</div>
<div class="t" style="left:125.30px;top:359.0px;font-size:11px;font-weight:400;color:#1c2127;font-family:'Liberation Sans',sans-serif;">0</div>
<div class="t" style="left:65.46px;top:402.0px;font-size:14px;font-weight:400;color:#1c2127;font-family:'Liberation Sans',sans-serif;transform:scaleX(0.9360);transform-origin:0 0;-webkit-text-stroke:0.55px #1c2127;">Sources</div>
<div class="t" style="left:129.50px;top:404.0px;font-size:11px;font-weight:400;color:#1c2127;font-family:'Liberation Sans',sans-serif;">0</div>
<div class="t" style="left:65.43px;top:447.0px;font-size:14px;font-weight:400;color:#1c2127;font-family:'Liberation Sans',sans-serif;transform:scaleX(0.9695);transform-origin:0 0;-webkit-text-stroke:0.55px #1c2127;">Function Interfaces</div>
<div class="t" style="left:197.20px;top:449.0px;font-size:11px;font-weight:400;color:#1c2127;font-family:'Liberation Sans',sans-serif;">0</div>
<div class="t" style="left:60.48px;top:884.0px;font-size:13px;font-weight:400;color:#1c2127;font-family:'Liberation Sans',sans-serif;transform:scaleX(1.0217);transform-origin:0 0;">No ontology</div>
<div class="t" style="left:294.97px;top:884.0px;font-size:13px;font-weight:400;color:#1c2127;font-family:'Liberation Sans',sans-serif;transform:scaleX(1.0257);transform-origin:0 0;">Select</div>
<div class="t" style="left:396.62px;top:99.0px;font-size:14px;font-weight:400;color:#5f6b7c;font-family:'Liberation Sans',sans-serif;transform:scaleX(0.9809);transform-origin:0 0;-webkit-text-stroke:0.55px #5f6b7c;">index.ts</div>
<div class="t" style="left:36.38px;top:912.0px;font-size:13px;font-weight:400;color:#5f6b7c;font-family:'Liberation Sans',sans-serif;transform:scaleX(1.0222);transform-origin:0 0;">Problems</div>
<div class="t" style="left:138.59px;top:912.0px;font-size:13px;font-weight:400;color:#5f6b7c;font-family:'Liberation Sans',sans-serif;transform:scaleX(1.0089);transform-origin:0 0;">Debugger</div>
<div class="t" style="left:242.00px;top:912.0px;font-size:13px;font-weight:400;color:#5f6b7c;font-family:'Liberation Sans',sans-serif;transform:scaleX(0.9500);transform-origin:0 0;">Tests</div>
<div class="t" style="left:316.73px;top:912.0px;font-size:13px;font-weight:400;color:#5f6b7c;font-family:'Liberation Sans',sans-serif;transform:scaleX(0.9707);transform-origin:0 0;">File Changes</div>
<div class="t" style="left:437.00px;top:912.0px;font-size:13px;font-weight:400;color:#5f6b7c;font-family:'Liberation Sans',sans-serif;transform:scaleX(0.9808);transform-origin:0 0;">Task Runner</div>
<div class="t" style="left:554.17px;top:912.0px;font-size:13px;font-weight:400;color:#5f6b7c;font-family:'Liberation Sans',sans-serif;transform:scaleX(1.0273);transform-origin:0 0;">Functions</div>
<div class="t" style="left:27.80px;top:940.0px;font-size:13.5px;font-weight:400;color:#ffffff;font-family:'Liberation Sans',sans-serif;transform:scaleX(0.9579);transform-origin:0 0;-webkit-text-stroke:0.55px #ffffff;">Workspace connected</div>
<div class="t" style="left:16.55px;top:968.0px;font-size:11px;font-weight:400;color:#1c2127;font-family:'Liberation Sans',sans-serif;transform:scaleX(0.9545);transform-origin:0 0;">Beta</div>
<div class="t" style="left:1171.47px;top:940.5px;font-size:12px;font-weight:400;color:#1c2127;font-family:'Liberation Sans',sans-serif;transform:scaleX(0.9308);transform-origin:0 0;">Project scoped</div>
<div class="t" style="left:1286.80px;top:940.5px;font-size:12px;font-weight:400;color:#1c2127;font-family:'Liberation Sans',sans-serif;transform:scaleX(0.8983);transform-origin:0 0;">Files saved</div>
<div class="t" style="left:1374.59px;top:940.5px;font-size:12px;font-weight:400;color:#1c2127;font-family:'Liberation Sans',sans-serif;transform:scaleX(0.9062);transform-origin:0 0;">Checks passed</div>
<div class="t" style="left:1128.44px;top:966.0px;font-size:14px;font-weight:400;color:#ffffff;font-family:'Liberation Sans',sans-serif;transform:scaleX(0.9561);transform-origin:0 0;-webkit-text-stroke:0.55px #ffffff;">add new object type</div>
<div class="t" style="left:1319.50px;top:967.0px;font-size:12px;font-weight:400;color:#ffffff;font-family:'Liberation Sans',sans-serif;">3</div>
<div class="t" style="left:1391.00px;top:966.0px;font-size:14px;font-weight:400;color:#1c2127;font-family:'Liberation Sans',sans-serif;transform:scaleX(0.9342);transform-origin:0 0;">View branch</div>
<div class="t" style="left:1364.00px;top:139.0px;font-size:14px;font-weight:400;color:#ffffff;font-family:'Liberation Sans',sans-serif;transform:scaleX(0.8865);transform-origin:0 0;-webkit-text-stroke:0.55px #ffffff;">Ask AIP Assist</div>
</body></html>
